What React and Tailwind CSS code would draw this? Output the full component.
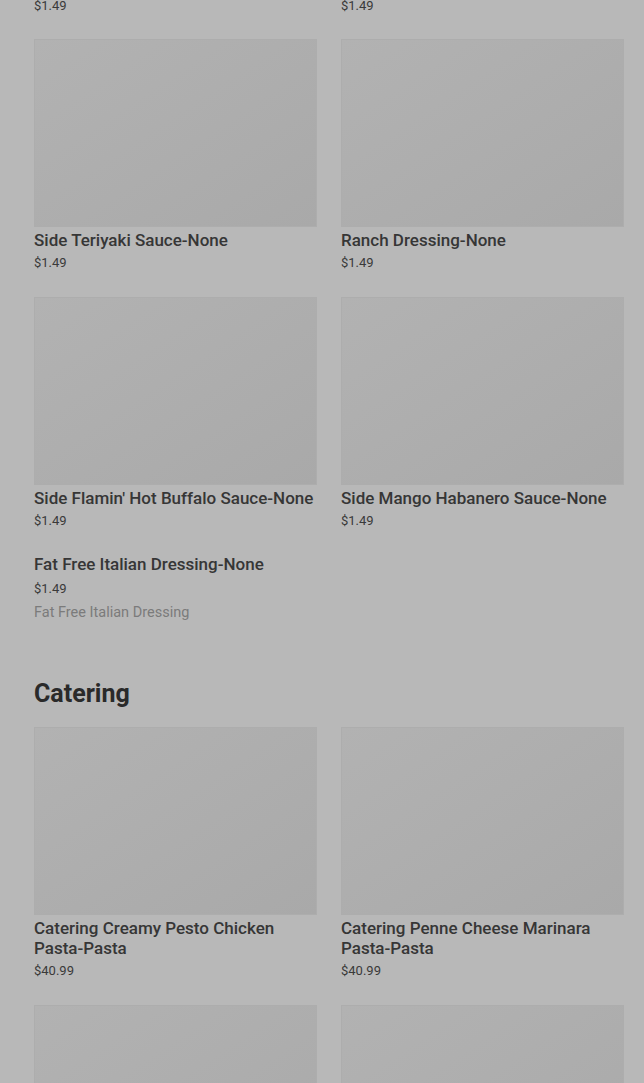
import React from 'react';

const font = { fontFamily: 'Roboto, "Liberation Sans", sans-serif' };

const sauces = [
  { id: 1, title: "Side Teriyaki Sauce-None", price: "$1.49" },
  { id: 2, title: "Ranch Dressing-None", price: "$1.49" },
  { id: 3, title: "Side Flamin' Hot Buffalo Sauce-None", price: "$1.49" },
  { id: 4, title: "Side Mango Habanero Sauce-None", price: "$1.49" },
];

const catering = [
  { id: 1, title: "Catering Creamy Pesto Chicken Pasta-Pasta", price: "$40.99" },
  { id: 2, title: "Catering Penne Cheese Marinara Pasta-Pasta", price: "$40.99" },
];

const ItemCard = ({ item }) => (
  <div className="flex flex-col">
    <div className="h-[188px] w-full bg-gradient-to-br from-[#b2b2b2] to-[#a9a9a9] border border-[#adadad]" />
    <div className="mt-[3px] text-[17px] leading-5 font-medium text-[#363636]">{item.title}</div>
    <div className="mt-[3px] text-[13px] leading-5 text-[#3a3a3a]">{item.price}</div>
  </div>
);

const App = () => {
  return (
    <div className="min-h-[1083px] w-full bg-[#b8b8b8] overflow-hidden pl-[34px] pr-[20px]" style={font}>
      {/* tail of the previous row, page is scrolled */}
      <div className="grid grid-cols-2 gap-x-6 -mt-1 text-[13px] leading-5 text-[#3a3a3a]">
        <div>$1.49</div>
        <div>$1.49</div>
      </div>

      <div className="grid grid-cols-2 gap-x-6 gap-y-6 mt-[23px]">
        {sauces.map(item => (
          <ItemCard key={item.id} item={item} />
        ))}
      </div>

      {/* item without picture */}
      <div className="mt-[23px] flex flex-col">
        <div className="text-[17px] leading-5 font-medium text-[#363636]">Fat Free Italian Dressing-None</div>
        <div className="mt-[5px] text-[13px] leading-5 text-[#3a3a3a]">$1.49</div>
        <div className="mt-1 text-[14.5px] leading-5 text-[#7b7b7b]">Fat Free Italian Dressing</div>
      </div>

      <h2 className="mt-[55px] text-[25px] leading-8 font-bold text-[#2a2a2a]">Catering</h2>

      <div className="grid grid-cols-2 gap-x-6 gap-y-6 mt-[17px]">
        {catering.map(item => (
          <ItemCard key={item.id} item={item} />
        ))}
        <div className="h-[188px] w-full bg-gradient-to-br from-[#b2b2b2] to-[#a9a9a9] border border-[#adadad]" />
        <div className="h-[188px] w-full bg-gradient-to-br from-[#b2b2b2] to-[#a9a9a9] border border-[#adadad]" />
      </div>
    </div>
  );
};

export default App;
